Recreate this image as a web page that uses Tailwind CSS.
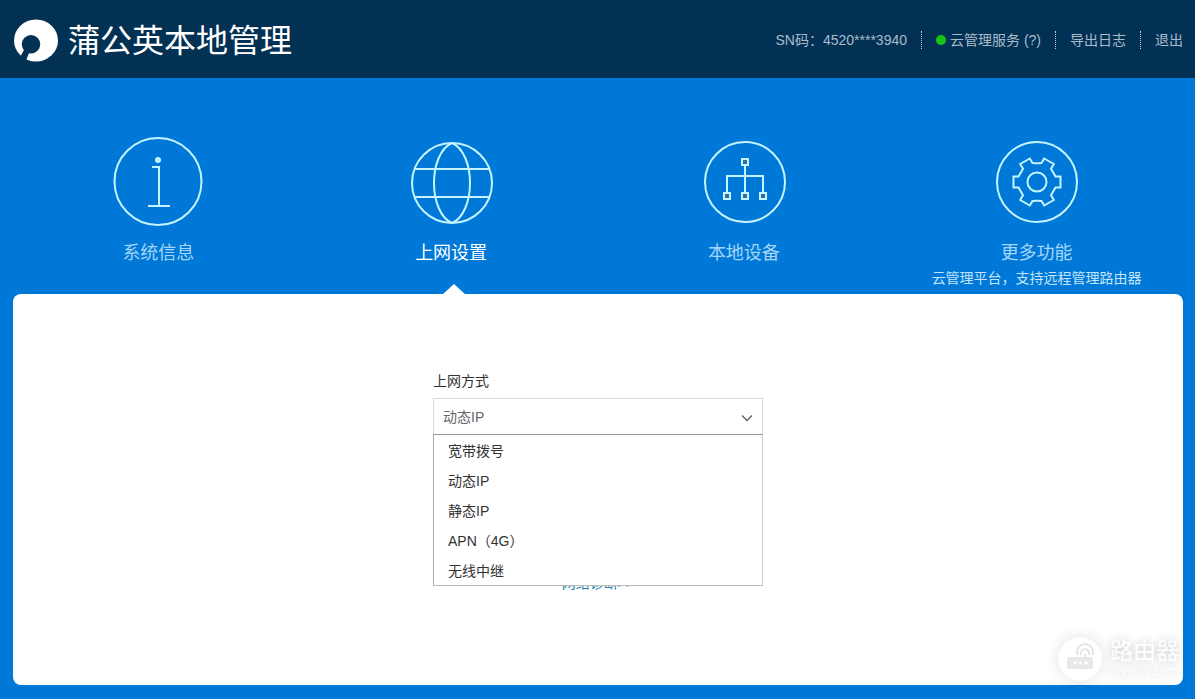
<!DOCTYPE html>
<html lang="zh-CN">
<head>
<meta charset="utf-8">
<meta name="viewport" content="width=device-width, initial-scale=1">
<title>蒲公英本地管理</title>
<script src="https://cdn.jsdelivr.net/npm/@tailwindcss/browser@4"></script>
</head>
<body class="relative flex min-h-screen flex-col bg-[#0078d7] font-['Liberation_Sans','Noto_Sans_CJK_SC',sans-serif] text-sm text-[#333]">

<header class="flex h-[78px] shrink-0 items-center justify-between bg-[#023154] px-3 pt-0.5">
  <div class="flex items-center gap-2.5">
    <svg class="h-[44px] w-[46px]" viewBox="0 0 46 44" aria-hidden="true">
      <ellipse cx="24" cy="22.500" rx="22" ry="21" fill="#fff"/>
      <circle cx="19" cy="26.200" r="9.200" fill="#023154"/>
      <path d="M12.500 31L7.500 40L10 43.500L14 42.500L17.500 34Z" fill="#023154"/>
    </svg>
    <h1 class="pt-0.5 text-[32px] leading-10 font-normal text-white">蒲公英本地管理</h1>
  </div>
  <nav class="flex items-center text-[#a9bccb]" aria-label="账户">
    <span class="pr-3.5">SN码：4520****3940</span>
    <a href="#cloud" class="flex items-center gap-1 border-l border-dotted border-[#c5d2dc] px-3.5 leading-[18px]"><span class="size-2.5 rounded-full bg-[#13c613]"></span><span>云管理服务 (?)</span></a>
    <a href="#log" class="border-l border-dotted border-[#c5d2dc] px-3.5 leading-[18px]">导出日志</a>
    <a href="#exit" class="border-l border-dotted border-[#c5d2dc] pl-3.5 leading-[18px]">退出</a>
  </nav>
</header>

<nav class="grid grid-cols-4 px-3 pt-[59px] text-lg leading-6 text-[#a5d6fa]" aria-label="主菜单">
  <a href="#info" class="flex flex-col items-center">
    <svg class="mb-3.5 size-[90px]" viewBox="0 0 90 90" fill="none" stroke="#c4f4ff" stroke-width="2" aria-hidden="true">
      <circle cx="45" cy="44.500" r="43.500"/><circle cx="45" cy="23" r="3" fill="#c4f4ff" stroke="none"/>
      <path d="M39 30h7v38M35 69h22"/>
    </svg>
    <span>系统信息</span>
  </a>
  <a href="#net" aria-current="page" class="relative flex flex-col items-center text-white">
    <svg class="mb-3.5 size-[90px]" viewBox="0 0 90 90" fill="none" stroke="#c4f4ff" stroke-width="2" aria-hidden="true">
      <circle cx="46" cy="46" r="40"/><path d="M8 32h76M8 60h76"/>
      <path d="M46 6C34 11 28 29 28 46s6 35 18 40M46 6c12 5 18 23 18 40s-6 35-18 40"/>
    </svg>
    <span>上网设置</span>
    <svg class="absolute bottom-0 left-1/2 h-2.5 w-[22px] -translate-x-2" viewBox="0 0 22 10" aria-hidden="true"><path d="M0 10L11 0l11 10z" fill="#fff"/></svg>
  </a>
  <a href="#devices" class="flex flex-col items-center">
    <svg class="mb-3.5 size-[90px]" viewBox="0 0 90 90" fill="none" stroke="#c4f4ff" stroke-width="2" aria-hidden="true">
      <circle cx="46" cy="45" r="40"/>
      <path d="M46 29v26M28 55V39h36v16"/>
      <path fill="#2d6f9f" d="M43 22h6v6h-6zM25 56h6v6h-6zM43 56h6v6h-6zM61 56h6v6h-6z"/>
    </svg>
    <span>本地设备</span>
  </a>
  <a href="#more" class="flex flex-col items-center pb-1.5">
    <svg class="mb-3.5 size-[90px]" viewBox="0 0 90 90" fill="none" stroke="#c4f4ff" stroke-width="2" aria-hidden="true">
      <circle cx="45" cy="45" r="40"/><circle cx="45" cy="45" r="9.500"/>
      <path transform="translate(45 45)" d="M18.500 5.500H23.500V-5.500H18.500L14-13.300 16.800-18 7.200-23.500 4.500-19Q0-18.500-4.500-19L-7.200-23.500-16.800-18-14-13.300-18.500-5.500H-23.500V5.500H-18.500L-14 13.300-16.800 18-7.200 23.500-4.500 19Q0 18.500 4.500 19L7.200 23.500 16.800 18 14 13.300Z"/>
    </svg>
    <span>更多功能</span>
    <span class="mt-[3px] text-sm leading-5 text-[#c2e4fc]">云管理平台，支持远程管理路由器</span>
  </a>
</nav>

<main class="mr-3 mb-3.5 ml-[13px] flex-1 rounded-lg bg-white px-4 pt-[77px] pb-8">
  <form class="mx-auto flex max-w-[330px] flex-col">
    <label for="mode" class="leading-5">上网方式</label>
    <div class="relative mt-[7px]">
      <select id="mode" class="block h-[37px] w-full appearance-none border border-[#d9d9d9] bg-white px-[9px] text-[#666]">
        <option>动态IP</option><option>宽带拨号</option><option>静态IP</option><option>APN（4G）</option><option>无线中继</option>
      </select>
      <svg class="pointer-events-none absolute top-4 right-2.5 h-2 w-3" viewBox="0 0 12 8" fill="none" stroke="#666" stroke-width="1.500" aria-hidden="true"><path d="M1 1.500l5 5 5-5"/></svg>
      <ul role="listbox" aria-label="上网方式" class="absolute inset-x-0 top-9 h-[152px] overflow-hidden border border-t-[#999] border-r-[#ccc] border-b-[#bbb] border-l-[#aaa] bg-white pt-px leading-[30px]">
        <li role="option" class="px-3.5">宽带拨号</li>
        <li role="option" class="px-3.5">动态IP</li>
        <li role="option" class="px-3.5">静态IP</li>
        <li role="option" class="px-3.5">APN（4G）</li>
        <li role="option" class="px-3.5">无线中继</li>
      </ul>
    </div>
    <a href="#diagnose" class="mt-[138px] self-center leading-5 text-[#2a7fa8]">网络诊断&gt;&gt;</a>
  </form>
</main>

<div class="pointer-events-none absolute right-4 bottom-4 flex items-center gap-1.5 text-white">
  <svg class="size-12 drop-shadow-[0_0_7px_#00000020]" viewBox="0 0 48 48" aria-hidden="true">
    <circle cx="24" cy="24" r="22" fill="#fff"/>
    <path d="M21.500 20a8 8 0 1 1 15 0M25 20a4.300 4.300 0 1 1 8 0M29 19v4" fill="none" stroke="#e4e4e4" stroke-width="1.800"/>
    <rect x="11" y="22" width="26" height="12" rx="2" fill="#e8e8e8"/>
    <g fill="#fff"><circle cx="19" cy="28" r="1.700"/><circle cx="24.500" cy="28" r="1.700"/><circle cx="30" cy="28" r="1.700"/></g>
  </svg>
  <div class="[text-shadow:0_0_8px_#00000040]">
    <div class="text-[23px] leading-6">路由器</div>
    <div class="font-['Open_Sans',sans-serif] text-xs leading-4">luyouqi.com</div>
  </div>
</div>
</body>
</html>
